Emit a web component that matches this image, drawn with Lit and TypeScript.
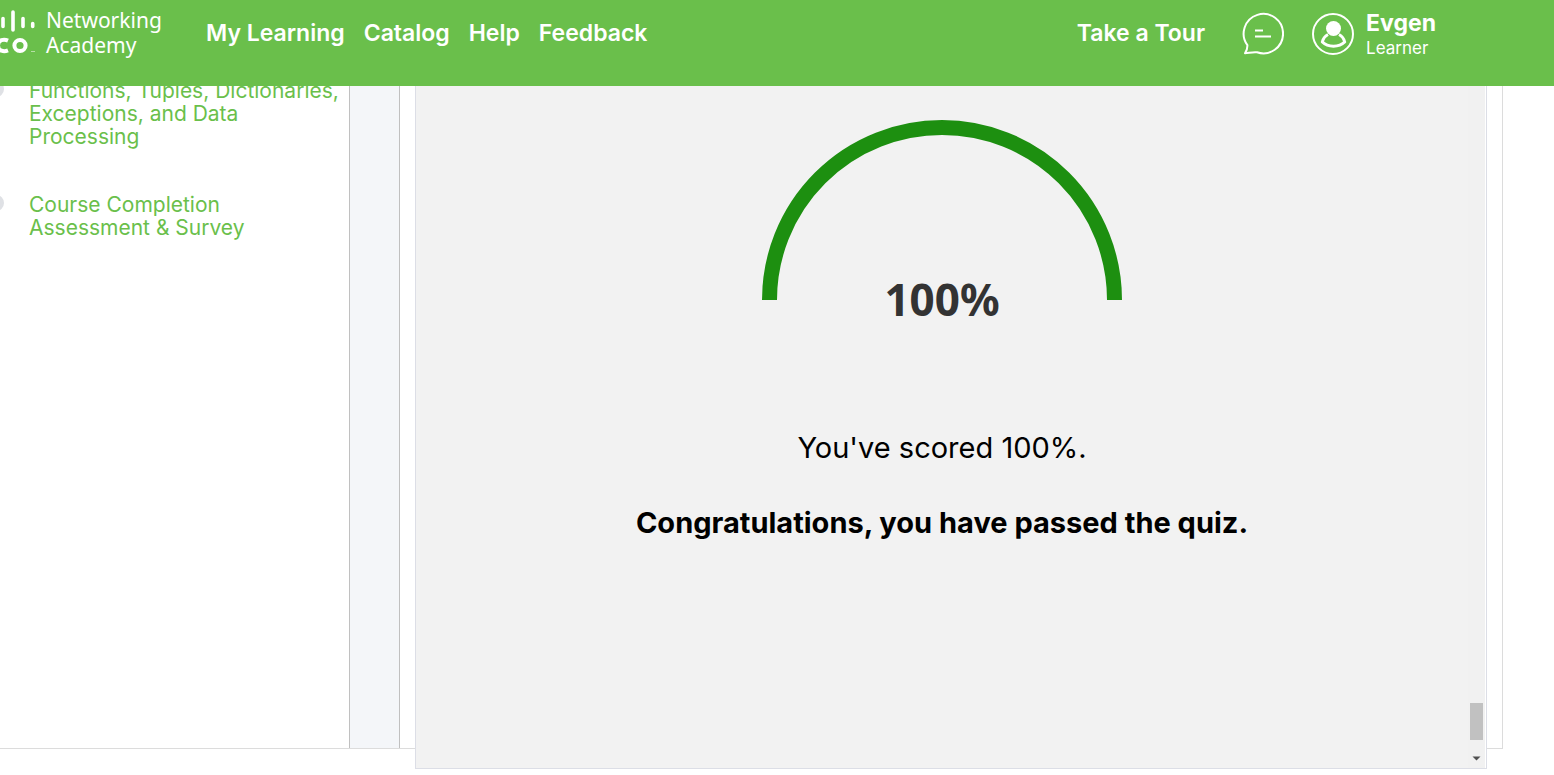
import { LitElement, html, css } from "lit";
import { customElement } from "lit/decorators.js";

@customElement("site-header")
class SiteHeader extends LitElement {
  static styles = css`
    :host {
      display: block;
      position: relative;
      z-index: 2;
      background: #6abf4b;
      color: #fff;
      font-family: Inter, "Liberation Sans", sans-serif;
    }
    .bar {
      display: flex;
      align-items: flex-start;
      height: 86px;
      box-sizing: border-box;
      padding: 8px 118px 0 0;
    }
    a { color: inherit; text-decoration: none; }
    .brand { display: flex; gap: 10px; }
    .mark { display: block; width: 36px; height: 50px; }
    .name {
      font: 400 21px/25px "Noto Sans", "Open Sans", sans-serif;
      width: 120px;
    }
    nav {
      display: flex;
      gap: 19px;
      margin-left: 40px;
      flex: 1;
    }
    .link { font-size: 23px; line-height: 50px; font-weight: 600; white-space: nowrap; }
    button {
      display: block;
      border: 0;
      padding: 0;
      background: none;
      color: inherit;
      font: inherit;
      cursor: pointer;
    }
    .chat { margin: 4px 28px 0 37px; }
    .chat svg, .avatar { display: block; width: 42px; height: 44px; }
    .user { display: flex; gap: 12px; text-align: left; padding-top: 4px; }
    .who { display: flex; flex-direction: column; margin-top: -3px; }
    .first { font-size: 23px; line-height: 28px; font-weight: 700; }
    .role { font-size: 17px; line-height: 22px; }
  `;

  render() {
    return html`
      <header class="bar">
        <a class="brand" href="#home">
          <svg class="mark" viewBox="0 0 36 50" aria-hidden="true">
            <g stroke="#fff" stroke-width="3.6" stroke-linecap="round">
              <path d="M3 10.500V18.500M13 4V22M23 10.500V18.500M32.700 15.500V18.500" />
            </g>
            <g fill="none" stroke="#fff" stroke-width="4">
              <path d="M8 32.600C4 30.800-2 31.600-2 37.400S4 44 8 42.400" />
              <circle cx="20" cy="37.500" r="5.600" />
            </g>
            <path d="M31 43.500h4" stroke="#fff" stroke-width="1" opacity=".5" />
          </svg>
          <span class="name">Networking Academy</span>
        </a>
        <nav>
          <a class="link" href="#learning">My Learning</a>
          <a class="link" href="#catalog">Catalog</a>
          <a class="link" href="#help">Help</a>
          <a class="link" href="#feedback">Feedback</a>
        </nav>
        <a class="link" href="#tour">Take a Tour</a>
        <button class="chat" aria-label="Messages">
          <svg viewBox="0 0 42 44" fill="none" stroke="#fff" stroke-width="2">
            <path d="M5.400 33.200A19.700 19.700 0 1 1 15 40.300C11 39.700 7 41 3 41.300C4.600 38.800 5.500 36 5.400 33.200Z" stroke-linejoin="round" />
            <path d="M13 18.500h8M13 24.500h16" />
          </svg>
        </button>
        <button class="user">
          <svg class="avatar" viewBox="0 0 42 44" fill="none" stroke="#fff" aria-hidden="true">
            <circle cx="21" cy="22" r="20" stroke-width="2" />
            <circle cx="21.500" cy="16.500" r="7.500" fill="#fff" stroke="none" />
            <path d="M16 22.500C13 24 11 27 10.300 30C16 35.500 27 35.500 32.700 30C32 27 30 24 27 22.500" stroke-width="3" stroke-linejoin="round" />
          </svg>
          <span class="who">
            <span class="first">Evgen</span>
            <span class="role">Learner</span>
          </span>
        </button>
      </header>
    `;
  }
}

@customElement("quiz-result")
class QuizResult extends LitElement {
  static styles = css`
    :host {
      display: flex;
      border: 1px solid #dcdee6;
      border-top: 0;
      background: #f2f2f2;
      color: #000;
      font-family: Inter, "Liberation Sans", sans-serif;
    }
    .body {
      flex: 1;
      display: flex;
      flex-direction: column;
      align-items: center;
      padding-top: 34px;
      text-align: center;
    }
    .gauge { display: block; width: 360px; height: 180px; }
    .percent {
      font: 700 44px/60px "Noto Sans", "Open Sans", sans-serif;
      color: #333;
      margin-top: -31px;
    }
    p { margin: 0; font-size: 29px; line-height: 40px; }
    .score { margin-top: 99px; }
    .passed { margin-top: 35px; font-weight: 700; }
    .track {
      display: flex;
      flex-direction: column;
      justify-content: flex-end;
      align-items: flex-end;
      box-sizing: border-box;
      width: 18px;
      padding-right: 2px;
      background: #f1f1f1;
      border-right: 1px solid #fff;
    }
    .thumb { width: 13px; height: 37px; background: #c1c1c1; }
    .down { display: block; width: 9px; height: 5px; margin: 16px 2px 7px; }
  `;

  render() {
    return html`
      <section class="body">
        <svg class="gauge" viewBox="0 0 360 180" aria-hidden="true">
          <path d="M7.500 180A172.500 172.500 0 0 1 352.500 180" fill="none" stroke="#1d8f10" stroke-width="15" />
        </svg>
        <div class="percent">100%</div>
        <p class="score">You've scored 100%.</p>
        <p class="passed">Congratulations, you have passed the quiz.</p>
      </section>
      <div class="track" aria-hidden="true">
        <div class="thumb"></div>
        <svg class="down" viewBox="0 0 9 5"><path d="M0.500 0.500H8.500L4.500 4.500Z" fill="#505050" /></svg>
      </div>
    `;
  }
}

@customElement("app-root")
class AppRoot extends LitElement {
  static styles = css`
    :host {
      display: flex;
      flex-direction: column;
      height: 100vh;
      overflow: hidden;
      background: #fff;
      font-family: Inter, "Liberation Sans", sans-serif;
    }
    .course {
      flex: 1;
      display: flex;
      min-height: 0;
      margin: 0 51px 26px 0;
      border: 1px solid #dcdcdc;
      border-width: 0 1px 1px 0;
    }
    .outline { width: 349px; flex: none; }
    ul {
      list-style: none;
      margin: -7px 0 0;
      padding: 0;
      display: flex;
      flex-direction: column;
      gap: 45px;
    }
    li { display: flex; gap: 25px; }
    .dot {
      flex: none;
      width: 16px;
      height: 16px;
      margin: 2px 0 0 -12px;
      border-radius: 50%;
      background: #dfe1e5;
    }
    .item {
      color: #6abf4b;
      text-decoration: none;
      font-size: 21px;
      line-height: 23px;
      max-width: 310px;
    }
    .short { max-width: 230px; }
    .gutter {
      flex: none;
      width: 49px;
      background: #f4f6f9;
      border: 1px solid #c0c0c0;
      border-width: 0 1px;
    }
    main { flex: 1; display: flex; padding: 0 15px; }
    quiz-result { flex: 1; margin-bottom: -21px; }
  `;

  render() {
    return html`
      <site-header></site-header>
      <div class="course">
        <aside class="outline">
          <ul>
            <li>
              <span class="dot"></span>
              <a class="item" href="#functions">Functions, Tuples, Dictionaries, Exceptions, and Data Processing</a>
            </li>
            <li>
              <span class="dot"></span>
              <a class="item short" href="#survey">Course Completion Assessment &amp; Survey</a>
            </li>
          </ul>
        </aside>
        <div class="gutter"></div>
        <main><quiz-result></quiz-result></main>
      </div>
    `;
  }
}
